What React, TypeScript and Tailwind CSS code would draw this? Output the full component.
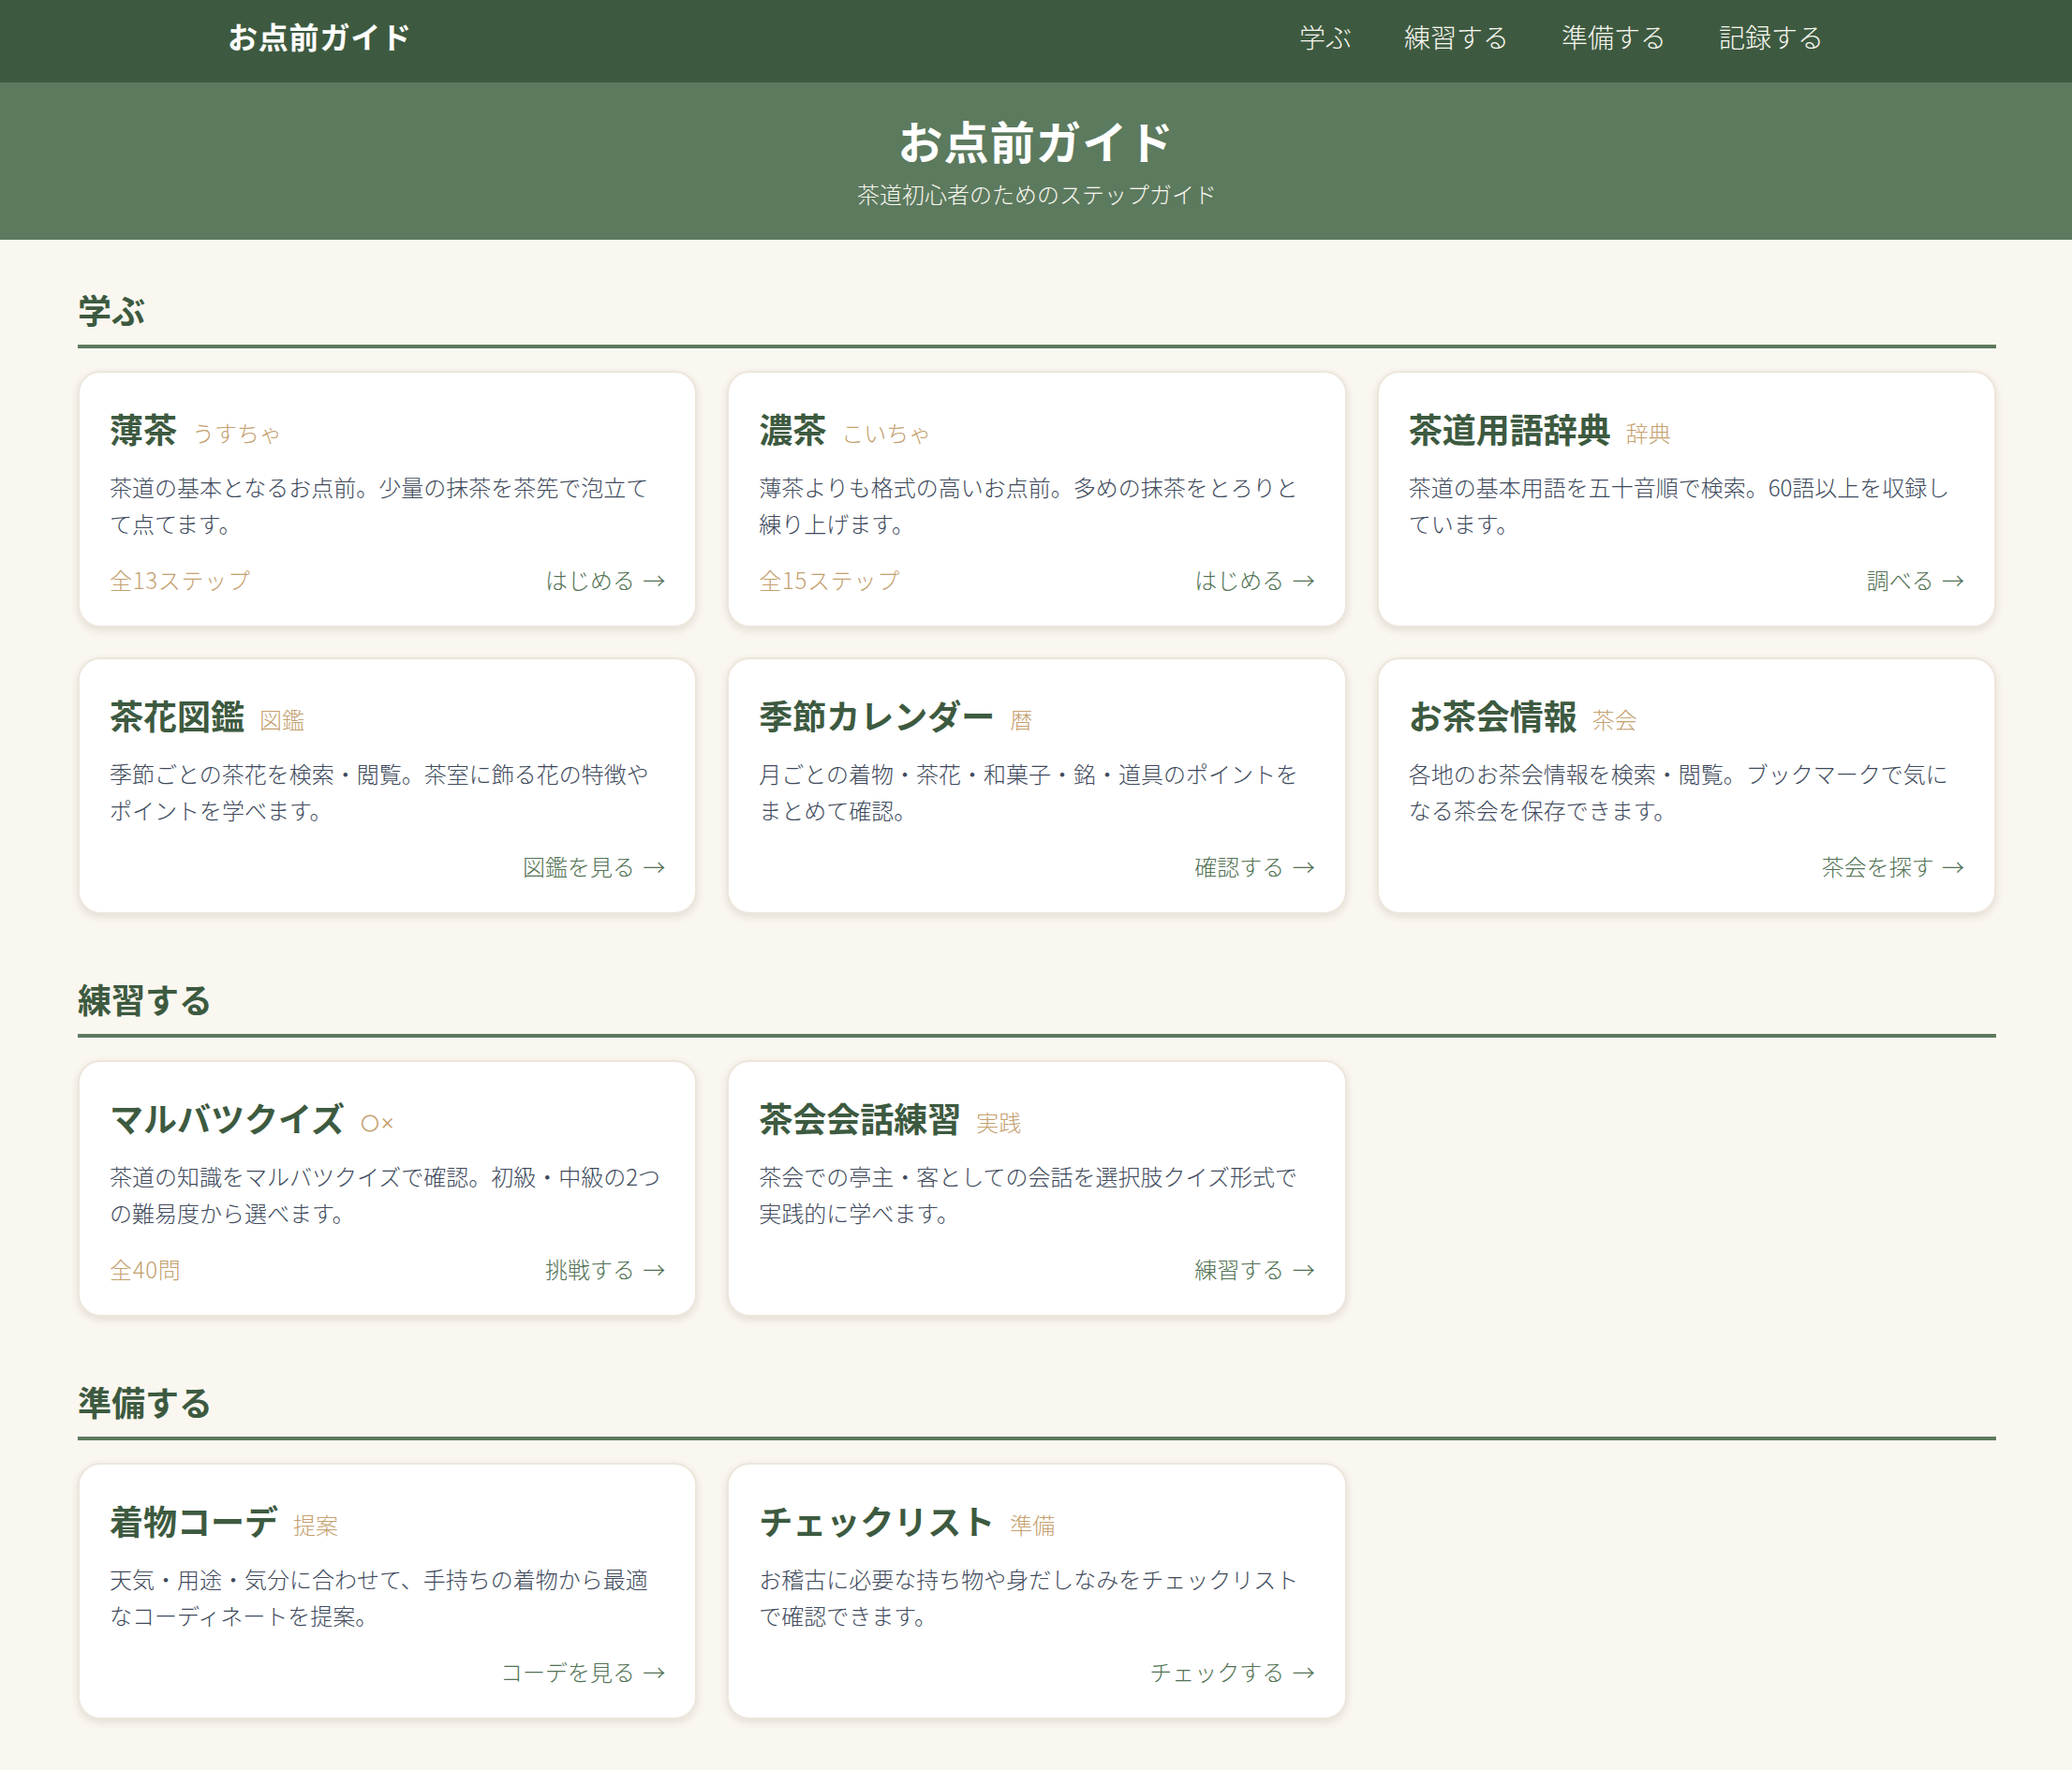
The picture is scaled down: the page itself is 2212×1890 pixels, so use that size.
const sections = [
  {
    title: '学ぶ',
    cards: [
      { title: '薄茶', label: 'うすちゃ', desc: '茶道の基本となるお点前。少量の抹茶を茶筅で泡立てて点てます。', meta: '全13ステップ', link: 'はじめる' },
      { title: '濃茶', label: 'こいちゃ', desc: '薄茶よりも格式の高いお点前。多めの抹茶をとろりと練り上げます。', meta: '全15ステップ', link: 'はじめる' },
      { title: '茶道用語辞典', label: '辞典', desc: '茶道の基本用語を五十音順で検索。60語以上を収録しています。', link: '調べる' },
      { title: '茶花図鑑', label: '図鑑', desc: '季節ごとの茶花を検索・閲覧。茶室に飾る花の特徴やポイントを学べます。', link: '図鑑を見る' },
      { title: '季節カレンダー', label: '暦', desc: '月ごとの着物・茶花・和菓子・銘・道具のポイントをまとめて確認。', link: '確認する' },
      { title: 'お茶会情報', label: '茶会', desc: '各地のお茶会情報を検索・閲覧。ブックマークで気になる茶会を保存できます。', link: '茶会を探す' },
    ],
  },
  {
    title: '練習する',
    cards: [
      { title: 'マルバツクイズ', label: '○×', desc: '茶道の知識をマルバツクイズで確認。初級・中級の2つの難易度から選べます。', meta: '全40問', link: '挑戦する' },
      { title: '茶会会話練習', label: '実践', desc: '茶会での亭主・客としての会話を選択肢クイズ形式で実践的に学べます。', link: '練習する' },
    ],
  },
  {
    title: '準備する',
    cards: [
      { title: '着物コーデ', label: '提案', desc: '天気・用途・気分に合わせて、手持ちの着物から最適なコーディネートを提案。', link: 'コーデを見る' },
      { title: 'チェックリスト', label: '準備', desc: 'お稽古に必要な持ち物や身だしなみをチェックリストで確認できます。', link: 'チェックする' },
    ],
  },
];

const navLinks = ['学ぶ', '練習する', '準備する', '記録する'];

type CardData = { title: string; label: string; desc: string; meta?: string; link: string };

function GuideCard({ card }: { card: CardData }) {
  return (
    <a className="flex h-[274px] flex-col rounded-3xl border-2 border-[#ede6dc] bg-white p-8 shadow-[0_3px_8px_rgba(60,40,20,0.12)]">
      <div className="mb-4 flex items-baseline gap-4">
        <h3 className="text-[36px] leading-[54px] font-bold text-[#3d5a40]">{card.title}</h3>
        <span className="-translate-y-px font-['Inter','Noto_Sans_CJK_JP',sans-serif] text-2xl leading-9 font-light text-[#c4a06f]">{card.label}</span>
      </div>
      <p className="text-2xl leading-[39px] font-light text-[#404a5c]">{card.desc}</p>
      <div className="mt-6 flex items-center justify-between text-2xl leading-[34px] font-light">
        <span className="tracking-[0.7px] text-[#c4a06f]">{card.meta}</span>
        <span className="text-[#527254]">
          {card.link}
          <span className="ml-[3px]"> →</span>
        </span>
      </div>
    </a>
  );
}

export default function App() {
  return (
    <div className="min-h-screen bg-[#faf7f0] font-['Noto_Sans_CJK_JP','Noto_Sans',sans-serif]">
      <nav className="h-[88px] bg-[#3d5a40]">
        <div className="mx-auto flex h-full w-[1726px] items-center justify-between pb-[11px]">
          <span className="-translate-y-px text-[32px] font-bold tracking-[0.8px] text-white">お点前ガイド</span>
          <ul className="flex gap-14 pr-[22px]">
            {navLinks.map((link) => (
              <li key={link} className="text-[28px] font-light text-[#faf7f0]">{link}</li>
            ))}
          </ul>
        </div>
      </nav>

      {/* Hero */}
      <header className="flex h-[168px] flex-col items-center justify-center bg-[#5c7a5e] pb-[7px]">
        <h1 className="mb-1 text-5xl leading-[72px] font-bold tracking-[1.2px] text-white">お点前ガイド</h1>
        <p className="pl-[2px] text-2xl leading-9 font-light text-[#faf7f0]">茶道初心者のためのステップガイド</p>
      </header>

      <main className="ml-[83px] w-[2048px] pt-12">
        {sections.map((section) => (
          <section key={section.title} className="mb-16">
            <h2 className="mb-6 h-[68px] border-b-4 border-[#5c7a5e] text-[36px] leading-[53px] font-bold text-[#3d5a40]">
              {section.title}
            </h2>
            <div className="grid grid-cols-3 gap-8">
              {section.cards.map((card) => (
                <GuideCard key={card.title} card={card} />
              ))}
            </div>
          </section>
        ))}
      </main>
    </div>
  );
}
